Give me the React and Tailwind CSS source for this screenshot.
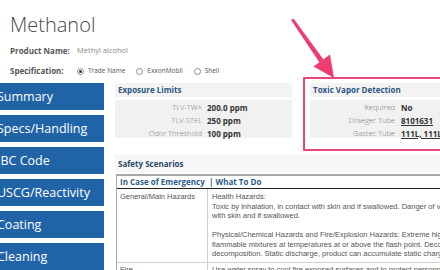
import React from "react";

function Radio({ checked, label }) {
  return (
    <div className="flex items-center gap-[4px]">
      <span className="w-[7px] h-[7px] rounded-full border border-[#8a8a8a] bg-white flex items-center justify-center">
        {checked && <span className="w-[3px] h-[3px] rounded-full bg-[#333]" />}
      </span>
      <span className="text-[6.5px] text-[#555]">{label}</span>
    </div>
  );
}

function NavButton({ children }) {
  return (
    <div className="h-[27px] bg-[#2163a7] text-white text-[12.5px] leading-[27px] -indent-[3px] whitespace-nowrap overflow-hidden">
      {children}
    </div>
  );
}

function Panel({ title, rows, labelW, gap }) {
  return (
    <div className="w-[177px] shrink-0">
      <div className="h-[14px] bg-[#f3f3f3] pl-[3px] text-[8px] font-bold leading-[14px] text-[#2d5684]">
        {title}
      </div>
      <div className="mt-[3px] h-[38px] bg-[#f1f1f1] pt-[1px]">
        {rows.map((r) => (
          <div key={r.label} className="flex h-[13px] items-center" style={{ gap }}>
            <div className="text-right text-[7.5px] font-light text-[#777] whitespace-nowrap" style={{ width: labelW }}>
              {r.label}
            </div>
            <div className={"text-[8px] font-bold text-[#333] whitespace-nowrap" + (r.link ? " underline" : "")}>
              {r.value}
            </div>
          </div>
        ))}
      </div>
    </div>
  );
}

export default function App() {
  return (
    <div className="relative w-[440px] h-[270px] overflow-hidden bg-white font-['Open_Sans',sans-serif]">
      <div className="pl-[10px] pt-[11px]">
        <div className="h-[28px] text-[20px] font-light leading-[28px] text-[#4a4a4a]">Methanol</div>
        <div className="mt-[5px] flex h-[14px] items-center">
          <div className="w-[67px] text-[8px] font-bold text-[#555]">Product Name:</div>
          <div className="text-[7.5px] text-[#888]">Methyl alcohol</div>
        </div>
        <div className="mt-[6px] flex h-[14px] items-center">
          <div className="w-[67px] text-[8px] font-bold text-[#555]">Specification:</div>
          <div className="flex items-center gap-[11px]">
            <Radio checked label="Trade Name" />
            <Radio label="ExxonMobil" />
            <Radio label="Shell" />
          </div>
        </div>
      </div>

      <div className="mt-[5px] flex">
        <nav className="w-[104px] shrink-0 flex flex-col gap-[5px]">
          <NavButton>Summary</NavButton>
          <NavButton>Specs/Handling</NavButton>
          <NavButton>IBC Code</NavButton>
          <NavButton>USCG/Reactivity</NavButton>
          <NavButton>Coating</NavButton>
          <NavButton>Cleaning</NavButton>
        </nav>

        <main className="ml-[11px] w-[420px] shrink-0">
          <div className="flex gap-[18px]">
            <Panel
              title="Exposure Limits"
              labelW={87}
              gap={5}
              rows={[
                { label: "TLV-TWA", value: "200.0 ppm" },
                { label: "TLV-STEL", value: "250 ppm" },
                { label: "Odor Threshold", value: "100 ppm" },
              ]}
            />
            <Panel
              title="Toxic Vapor Detection"
              labelW={85}
              gap={6}
              rows={[
                { label: "Required", value: "No" },
                { label: "Draeger Tube", value: "8101631", link: true },
                { label: "Gastec Tube", value: "111L, 111LL", link: true },
              ]}
            />
          </div>

          <div className="mt-[17px] h-[17px] bg-[#f6f6f6] pl-[3px] text-[8px] font-bold leading-[17px] text-[#2d4a6b]">
            Safety Scenarios
          </div>

          <div className="mt-[2px] ml-[1px] border-t-2 border-l border-[#a8a8a8]">
            <div className="flex h-[13px] items-center border-b border-[#222] text-[8px] font-bold text-[#2d5b8b]">
              <div className="w-[91px] pl-[3px] whitespace-nowrap">In Case of Emergency</div>
              <div className="pl-[1px] whitespace-nowrap">| What To Do</div>
            </div>
            <div className="flex border-b border-[#cfcfcf] font-['Liberation_Sans',Arial,sans-serif] text-[7.5px] leading-[9.5px] text-[#555]">
              <div className="w-[91px] shrink-0 border-r border-[#cfcfcf] pl-[3px] pt-[3px] pb-[3px]">General/Main Hazards</div>
              <div className="pl-[4px] pt-[3px] pb-[3px] whitespace-nowrap">
                Health Hazards:
                <br />
                Toxic by inhalation, in contact with skin and if swallowed. Danger of very serious irreversible effects
                <br />
                with skin and if swallowed.
                <br />
                <br />
                Physical/Chemical Hazards and Fire/Explosion Hazards: Extreme highly flammable
                <br />
                flammable mixtures at temperatures at or above the flash point. Decomposition
                <br />
                decomposition. Static discharge, product can accumulate static charge
              </div>
            </div>
            <div className="flex font-['Liberation_Sans',Arial,sans-serif] text-[7.5px] leading-[9.5px] text-[#555]">
              <div className="w-[91px] shrink-0 border-r border-[#cfcfcf] pl-[3px] pt-[2px]">Fire</div>
              <div className="pl-[4px] pt-[2px] whitespace-nowrap">
                Use water spray to cool fire exposed surfaces and to protect personnel.
              </div>
            </div>
          </div>
        </main>
      </div>

      {/* annotation: arrow and highlight box */}
      <svg className="absolute left-0 top-0 pointer-events-none" width="440" height="270" viewBox="0 0 440 270">
        <polygon points="291,20 293.5,18.6 323.5,59.5 319.5,62.5" fill="#ef3d72" />
        <polygon points="334,78 313.5,66.5 330,54.5" fill="#ef3d72" />
      </svg>
      <div className="absolute left-[303px] top-[77px] w-[160px] h-[74px] border-2 border-[#e8467a] rounded-[1px] pointer-events-none" />
    </div>
  );
}
